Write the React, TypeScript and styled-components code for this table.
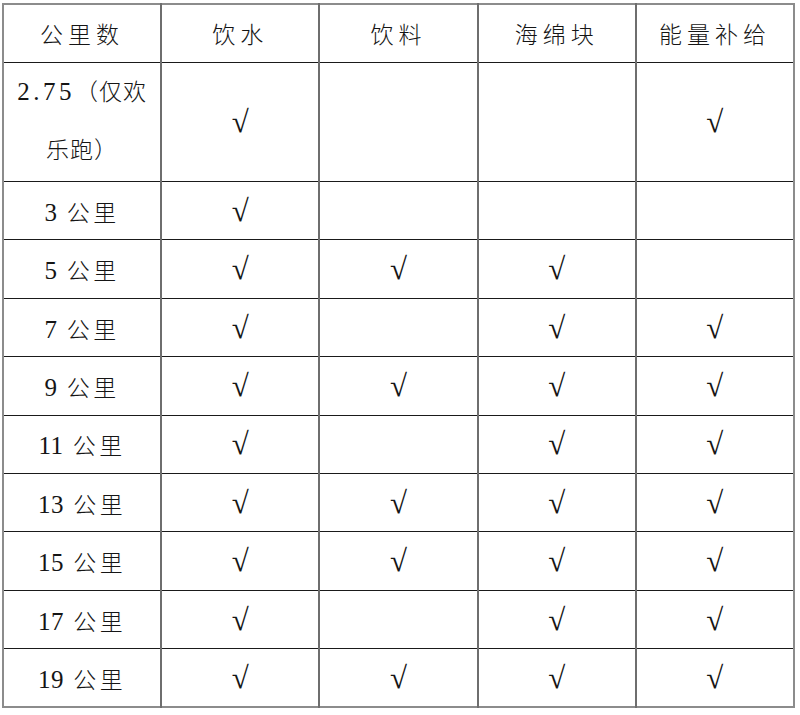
import React from "react";
import styled, { createGlobalStyle } from "styled-components";

const Global = createGlobalStyle`
  html, body { margin: 0; padding: 0; background: #ffffff; }
  body { font-family: "Liberation Serif", "Noto Sans CJK SC", serif; color: #151515; }
`;

const Page = styled.div`
  padding: 3px 0 0 2px;
`;

const Table = styled.table`
  border-collapse: collapse;
  table-layout: fixed;
  width: 793px;
  border: 2px solid #8c8c8c;
`;

const Row = styled.tr<{ $tall?: boolean }>`
  height: ${(p) => (p.$tall ? "116.9px" : "58.4px")};
`;

const Cell = styled.td<{ $head?: boolean; $wrap?: boolean }>`
  padding: 0;
  text-align: center;
  vertical-align: middle;
  font-size: 23px;
  font-weight: 300;
  line-height: ${(p) => (p.$wrap ? "58.6px" : "normal")};
  letter-spacing: ${(p) => (p.$head ? "5px" : p.$wrap ? "1px" : "3.5px")};
  border-top: 1px solid #1a1a1a;
  border-bottom: 1px solid #1a1a1a;
  border-left: 2px solid #6e6e6e;
  border-right: 2px solid #6e6e6e;
  color: #151515;
  &:first-child { border-left-color: #8c8c8c; }
  &:last-child { border-right-color: #8c8c8c; }
`;

const HeadRowCell = styled(Cell)`
  border-top: 2px solid #8c8c8c;
`;

const Num = styled.span<{ $spaced?: boolean }>`
  font-family: "Liberation Serif", serif;
  font-size: 25px;
  font-weight: 400;
  letter-spacing: ${(p) => (p.$spaced ? "3.5px" : "0.5px")};
`;

const Check = styled.span`
  font-family: "Liberation Serif", "DejaVu Serif", serif;
  font-size: 31px;
  font-weight: 400;
  letter-spacing: 0;
  line-height: 1;
`;

const Line = styled.span`
  display: block;
  white-space: nowrap;
`;

type R = { label: React.ReactNode; marks: boolean[]; tall?: boolean; wrap?: boolean };

const km = (n: string) => (
  <>
    <Num>{n}</Num> 公里
  </>
);

const rows: R[] = [
  {
    label: (
      <>
        <Line>
          <Num $spaced>2.75</Num>（仅欢
        </Line>
        <Line>乐跑）</Line>
      </>
    ),
    marks: [true, false, false, true],
    tall: true,
    wrap: true,
  },
  { label: km("3"), marks: [true, false, false, false] },
  { label: km("5"), marks: [true, true, true, false] },
  { label: km("7"), marks: [true, false, true, true] },
  { label: km("9"), marks: [true, true, true, true] },
  { label: km("11"), marks: [true, false, true, true] },
  { label: km("13"), marks: [true, true, true, true] },
  { label: km("15"), marks: [true, true, true, true] },
  { label: km("17"), marks: [true, false, true, true] },
  { label: km("19"), marks: [true, true, true, true] },
];

const headers = ["公里数", "饮水", "饮料", "海绵块", "能量补给"];

export default function App() {
  return (
    <>
      <Global />
      <Page>
        <Table>
          <tbody>
            <Row>
              {headers.map((h) => (
                <HeadRowCell key={h} $head>
                  {h}
                </HeadRowCell>
              ))}
            </Row>
            {rows.map((r, i) => (
              <Row key={i} $tall={r.tall}>
                <Cell $wrap={r.wrap}>{r.label}</Cell>
                {r.marks.map((m, j) => (
                  <Cell key={j}>{m ? <Check>√</Check> : null}</Cell>
                ))}
              </Row>
            ))}
          </tbody>
        </Table>
      </Page>
    </>
  );
}
